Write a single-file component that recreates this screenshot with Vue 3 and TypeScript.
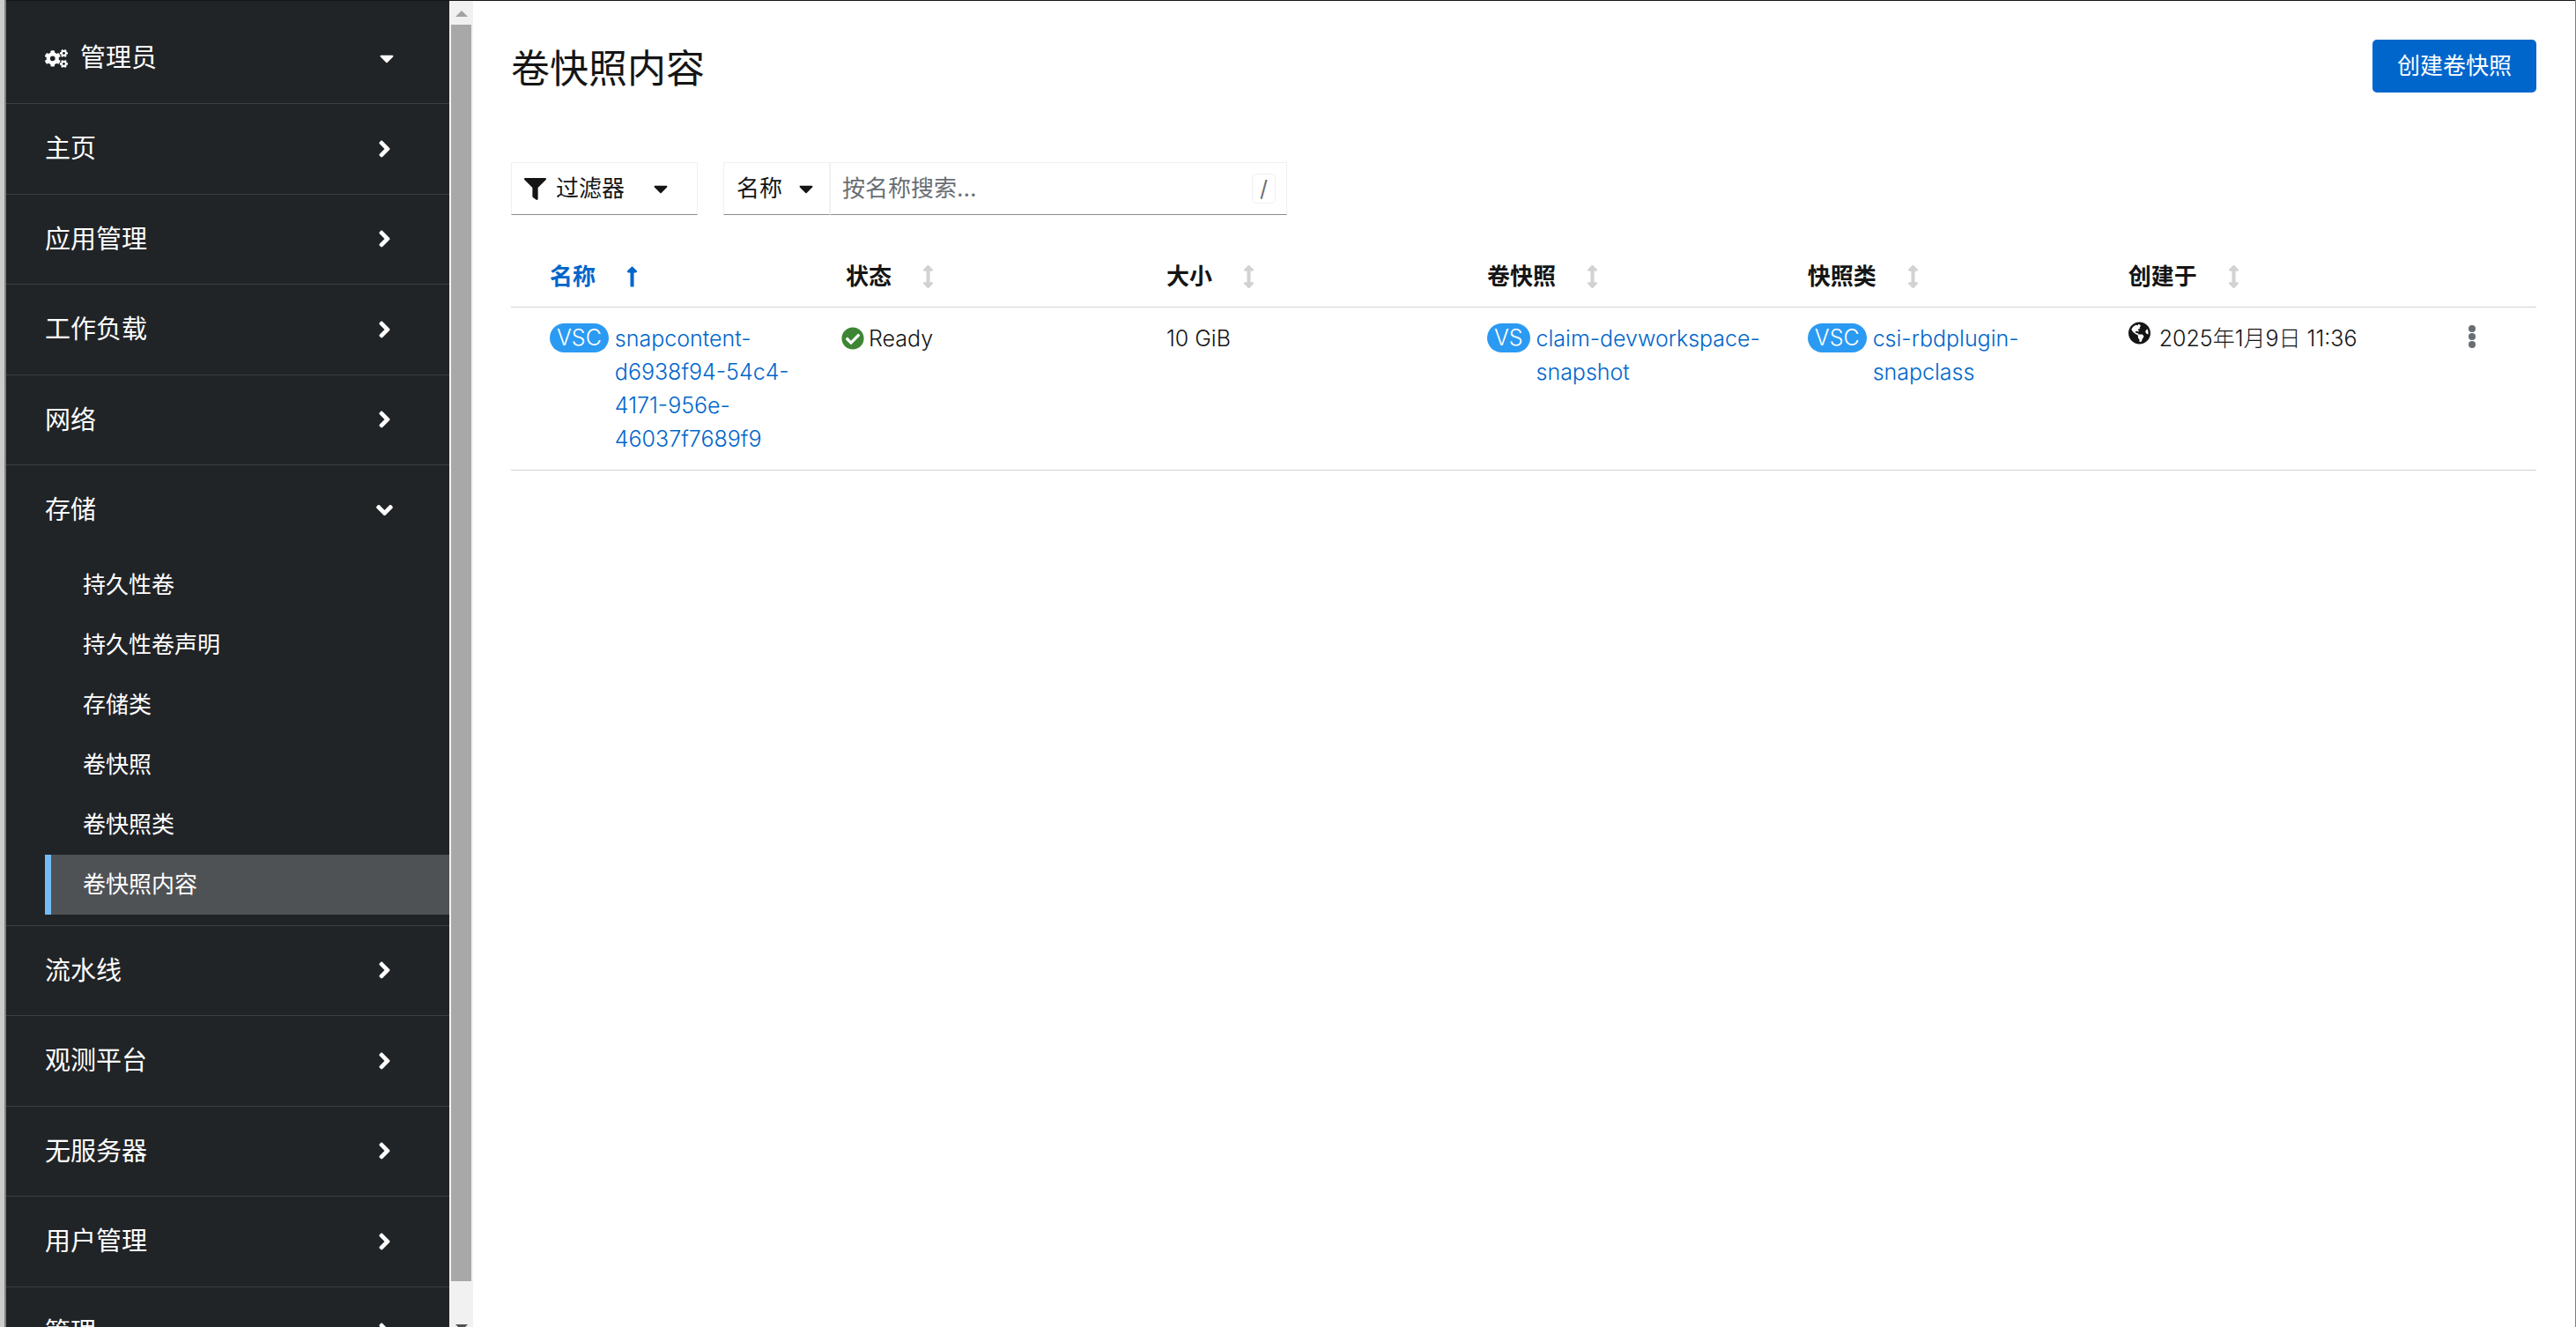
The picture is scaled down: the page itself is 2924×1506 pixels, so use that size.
<script setup lang="ts">
import { ref } from 'vue'

interface NavSection {
  label: string
  children?: string[]
}

interface Column {
  key: string
  label: string
}

const sections: NavSection[] = [
  { label: '主页' },
  { label: '应用管理' },
  { label: '工作负载' },
  { label: '网络' },
  { label: '存储', children: ['持久性卷', '持久性卷声明', '存储类', '卷快照', '卷快照类', '卷快照内容'] },
  { label: '流水线' },
  { label: '观测平台' },
  { label: '无服务器' },
  { label: '用户管理' },
  { label: '管理' },
]

const columns: Column[] = [
  { key: 'name', label: '名称' },
  { key: 'status', label: '状态' },
  { key: 'size', label: '大小' },
  { key: 'snapshot', label: '卷快照' },
  { key: 'class', label: '快照类' },
  { key: 'created', label: '创建于' },
]

const rows = [
  {
    name: 'snapcontent-d6938f94-54c4-4171-956e-46037f7689f9',
    status: 'Ready',
    size: '10 GiB',
    snapshot: 'claim-devworkspace-snapshot',
    snapshotClass: 'csi-rbdplugin-snapclass',
    created: '2025年1月9日 11:36',
  },
]

const openSection = ref('存储')
const activeItem = ref('卷快照内容')
const sortKey = ref('name')
const search = ref('')

function toggle(section: NavSection) {
  openSection.value = openSection.value === section.label ? '' : section.label
}

const caretPath =
  'M31.3 192h257.3c17.8 0 26.7 21.5 14.1 34.1L174.1 354.8c-7.8 7.8-20.5 7.8-28.3 0L17.2 226.1C4.6 213.5 13.5 192 31.3 192z'
const sortUpPath =
  'M88 166.059V468c0 6.627 5.373 12 12 12h56c6.627 0 12-5.373 12-12V166.059h46.059c21.382 0 32.09-25.851 16.971-40.971l-86.059-86.059c-9.373-9.373-24.569-9.373-33.941 0l-86.059 86.059c-15.119 15.119-4.411 40.971 16.971 40.971H88z'
const sortNonePath =
  'M214.059 377.941H168V134.059h46.059c21.382 0 32.09-25.851 16.971-40.971L144.971 7.029c-9.373-9.373-24.568-9.373-33.941 0L24.971 93.088c-15.119 15.119-4.411 40.971 16.971 40.971H88v243.882H41.941c-21.382 0-32.09 25.851-16.971 40.971l86.059 86.059c9.373 9.373 24.568 9.373 33.941 0l86.059-86.059c15.12-15.119 4.412-40.971-16.97-40.971z'
</script>

<template>
  <div class="app">
    <div class="window-edge"></div>
    <div class="shell">
      <nav class="sidebar" aria-label="主导航">
        <button class="perspective" type="button">
          <svg class="cogs" viewBox="0 0 640 512" aria-hidden="true">
            <path
              d="M512.1 191l-8.2 14.3c-3 5.3-9.4 7.5-15.1 5.4-11.8-4.4-22.6-10.7-32.1-18.6-4.6-3.8-5.8-10.5-2.8-15.7l8.2-14.3c-6.9-8-12.3-17.3-15.9-27.4h-16.5c-6 0-11.2-4.3-12.2-10.3-2-12-2.1-24.6 0-37.1 1-6 6.2-10.4 12.2-10.4h16.5c3.6-10.1 9-19.4 15.9-27.4l-8.2-14.3c-3-5.2-1.9-11.9 2.8-15.7 9.5-7.9 20.4-14.2 32.1-18.6 5.7-2.1 12.1.1 15.1 5.4l8.2 14.3c10.5-1.9 21.2-1.9 31.7 0L552 6.3c3-5.3 9.4-7.5 15.1-5.4 11.8 4.4 22.6 10.7 32.1 18.6 4.6 3.8 5.8 10.5 2.8 15.7l-8.2 14.3c6.9 8 12.3 17.3 15.9 27.4h16.5c6 0 11.2 4.3 12.2 10.3 2 12 2.1 24.6 0 37.1-1 6-6.2 10.4-12.2 10.4h-16.5c-3.6 10.1-9 19.4-15.9 27.4l8.2 14.3c3 5.2 1.9 11.9-2.8 15.7-9.5 7.9-20.4 14.2-32.1 18.6-5.7 2.1-12.1-.1-15.1-5.4l-8.2-14.3c-10.4 1.9-21.2 1.9-31.7 0zm-10.5-58.8c38.5 29.6 82.4-14.3 52.8-52.8-38.5-29.7-82.4 14.3-52.8 52.8zM386.3 286.1l33.7 16.8c10.1 5.8 14.5 18.1 10.5 29.1-8.9 24.2-26.4 46.4-42.6 65.8-7.4 8.9-20.2 11.1-30.3 5.3l-29.1-16.8c-16 13.7-34.6 24.6-54.9 31.7v33.6c0 11.6-8.3 21.6-19.7 23.6-24.6 4.2-50.4 4.4-75.9 0-11.5-2-20-11.9-20-23.6V418c-20.3-7.2-38.9-18-54.9-31.7L74 403c-10 5.8-22.9 3.6-30.3-5.3-16.2-19.4-33.3-41.6-42.2-65.7-4-10.9.4-23.2 10.5-29.1l33.3-16.8c-3.9-20.9-3.9-42.4 0-63.4L12 205.8c-10.1-5.8-14.6-18.1-10.5-29 8.9-24.2 26-46.4 42.2-65.8 7.4-8.9 20.2-11.1 30.3-5.3l29.1 16.8c16-13.7 34.6-24.6 54.9-31.7V57.1c0-11.5 8.2-21.5 19.6-23.5 24.6-4.2 50.5-4.4 76-.1 11.5 2 20 11.9 20 23.6v33.6c20.3 7.2 38.9 18 54.9 31.7l29.1-16.8c10-5.8 22.9-3.6 30.3 5.3 16.2 19.4 33.2 41.6 42.1 65.8 4 10.9.1 23.2-10 29.1l-33.7 16.8c3.9 21 3.9 42.5 0 63.5zm-117.6 21.1c59.2-77-28.7-164.9-105.7-105.7-59.2 77 28.7 164.9 105.7 105.7zm243.4 182.7l-8.2 14.3c-3 5.3-9.4 7.5-15.1 5.4-11.8-4.4-22.6-10.7-32.1-18.6-4.6-3.8-5.8-10.5-2.8-15.7l8.2-14.3c-6.9-8-12.3-17.3-15.9-27.4h-16.5c-6 0-11.2-4.3-12.2-10.3-2-12-2.1-24.6 0-37.1 1-6 6.2-10.4 12.2-10.4h16.5c3.6-10.1 9-19.4 15.9-27.4l-8.2-14.3c-3-5.2-1.9-11.9 2.8-15.7 9.5-7.9 20.4-14.2 32.1-18.6 5.7-2.1 12.1.1 15.1 5.4l8.2 14.3c10.5-1.9 21.2-1.9 31.7 0l8.2-14.3c3-5.3 9.4-7.5 15.1-5.4 11.8 4.4 22.6 10.7 32.1 18.6 4.6 3.8 5.8 10.5 2.8 15.7l-8.2 14.3c6.9 8 12.3 17.3 15.9 27.4h16.5c6 0 11.2 4.3 12.2 10.3 2 12 2.1 24.6 0 37.1-1 6-6.2 10.4-12.2 10.4h-16.5c-3.6 10.1-9 19.4-15.9 27.4l8.2 14.3c3 5.2 1.9 11.9-2.8 15.7-9.5 7.9-20.4 14.2-32.1 18.6-5.7 2.1-12.1-.1-15.1-5.4l-8.2-14.3c-10.4 1.9-21.2 1.9-31.7 0zM501.6 431c38.5 29.6 82.4-14.3 52.8-52.8-38.5-29.6-82.4 14.3-52.8 52.8z"
            />
          </svg>
          <span class="perspective-label">管理员</span>
          <svg class="caret" viewBox="0 0 320 512" aria-hidden="true"><path :d="caretPath" /></svg>
        </button>

        <ul class="nav-list">
          <li v-for="section in sections" :key="section.label" class="nav-section">
            <button
              class="nav-toggle"
              type="button"
              :aria-expanded="openSection === section.label"
              @click="toggle(section)"
            >
              <span>{{ section.label }}</span>
              <svg
                class="angle"
                :class="{ open: openSection === section.label }"
                viewBox="0 0 256 512"
                aria-hidden="true"
              >
                <path
                  d="M224.3 273l-136 136c-9.4 9.4-24.6 9.4-33.9 0l-22.6-22.6c-9.4-9.4-9.4-24.6 0-33.9l96.4-96.4-96.4-96.4c-9.4-9.4-9.4-24.6 0-33.9L54.3 103c9.4-9.4 24.6-9.4 33.9 0l136 136c9.5 9.4 9.5 24.6.1 34z"
                />
              </svg>
            </button>
            <ul v-if="section.children && openSection === section.label" class="subnav">
              <li v-for="item in section.children" :key="item">
                <a
                  href="#"
                  class="subnav-link"
                  :class="{ active: item === activeItem }"
                  @click.prevent="activeItem = item"
                  >{{ item }}</a
                >
              </li>
            </ul>
          </li>
        </ul>
      </nav>

      <div class="scrollbar" aria-hidden="true">
        <div class="scroll-up"></div>
        <div class="scroll-thumb"></div>
        <div class="scroll-down"></div>
      </div>

      <main class="content">
        <header class="page-header">
          <h1>卷快照内容</h1>
          <button class="primary" type="button">创建卷快照</button>
        </header>

        <div class="toolbar">
          <button class="field filter" type="button">
            <svg class="funnel" viewBox="0 0 512 512" aria-hidden="true">
              <path
                d="M487.976 0H24.028C2.71 0-8.047 25.866 7.058 40.971L192 225.941V432c0 7.831 3.821 15.17 10.237 19.662l80 55.98C298.02 518.69 320 507.493 320 487.98V225.941l184.947-184.97C520.021 25.896 509.338 0 487.976 0z"
              />
            </svg>
            <span class="filter-label">过滤器</span>
            <svg class="caret" viewBox="0 0 320 512" aria-hidden="true"><path :d="caretPath" /></svg>
          </button>

          <div class="search-group">
            <div class="select-wrap">
              <select class="field" aria-label="搜索字段">
                <option>名称</option>
              </select>
              <svg class="caret select-caret" viewBox="0 0 320 512" aria-hidden="true">
                <path :d="caretPath" />
              </svg>
            </div>
            <div class="field search">
              <input v-model="search" type="text" aria-label="按名称搜索" placeholder="按名称搜索..." />
              <kbd>/</kbd>
            </div>
          </div>
        </div>

        <table>
          <colgroup>
            <col class="col-name" />
            <col v-for="n in 5" :key="n" class="col-data" />
            <col class="col-actions" />
          </colgroup>
          <thead>
            <tr>
              <th v-for="column in columns" :key="column.key" scope="col">
                <button
                  class="sort"
                  :class="{ sorted: sortKey === column.key }"
                  type="button"
                  @click="sortKey = column.key"
                >
                  <span>{{ column.label }}</span>
                  <svg viewBox="0 0 256 512" aria-hidden="true">
                    <path :d="sortKey === column.key ? sortUpPath : sortNonePath" />
                  </svg>
                </button>
              </th>
              <td></td>
            </tr>
          </thead>
          <tbody>
            <tr v-for="row in rows" :key="row.name">
              <td>
                <div class="resource">
                  <span class="badge">VSC</span><a href="#">{{ row.name }}</a>
                </div>
              </td>
              <td>
                <div class="status">
                  <svg viewBox="0 0 512 512" aria-hidden="true">
                    <path
                      d="M504 256c0 136.967-111.033 248-248 248S8 392.967 8 256 119.033 8 256 8s248 111.033 248 248zM227.314 387.314l184-184c6.248-6.248 6.248-16.379 0-22.627l-22.627-22.627c-6.248-6.249-16.379-6.249-22.628 0L216 308.118l-70.059-70.059c-6.248-6.248-16.379-6.248-22.628 0l-22.627 22.627c-6.248 6.248-6.248 16.379 0 22.627l104 104c6.249 6.249 16.379 6.249 22.628.001z"
                    />
                  </svg>
                  <span>{{ row.status }}</span>
                </div>
              </td>
              <td>{{ row.size }}</td>
              <td>
                <div class="resource">
                  <span class="badge">VS</span><a href="#">{{ row.snapshot }}</a>
                </div>
              </td>
              <td>
                <div class="resource">
                  <span class="badge">VSC</span><a href="#">{{ row.snapshotClass }}</a>
                </div>
              </td>
              <td>
                <div class="created">
                  <svg viewBox="0 0 496 512" aria-hidden="true">
                    <path
                      d="M248 8C111.03 8 0 119.03 0 256s111.03 248 248 248 248-111.03 248-248S384.97 8 248 8zm82.29 357.6c-3.9 3.88-7.99 7.95-11.31 11.28-2.99 3-5.1 6.7-6.17 10.71-1.51 5.66-2.73 11.38-4.77 16.87l-17.39 46.85c-13.76 3-28 4.69-42.65 4.69v-27.38c1.69-12.62-7.64-36.26-22.63-51.25-6-6-9.37-14.14-9.37-22.63v-32.01c0-11.64-6.27-22.34-16.46-27.97-14.37-7.95-34.81-19.06-48.81-26.11-11.48-5.78-22.1-13.14-31.65-21.75l-.8-.72a114.792 114.792 0 0 1-18.06-20.74c-9.38-13.77-24.66-36.42-34.59-51.14 20.47-45.5 57.36-82.04 103.2-101.89l24.01 12.01C203.48 89.74 216 82.01 216 70.11v-11.3c7.99-1.29 16.12-2.11 24.39-2.42l28.3 28.3c6.25 6.25 6.25 16.38 0 22.63L264 112l-10.34 10.34c-3.12 3.12-3.12 8.19 0 11.31l4.69 4.69c3.12 3.12 3.12 8.19 0 11.31l-8 8a8.008 8.008 0 0 1-5.66 2.34h-8.99c-2.08 0-4.08.81-5.58 2.27l-9.92 9.65a8.008 8.008 0 0 0-1.58 9.31l15.59 31.19c2.66 5.32-1.21 11.58-7.15 11.58h-5.64c-1.93 0-3.79-.7-5.24-1.96l-9.28-8.06a16.017 16.017 0 0 0-15.55-3.1l-31.17 10.39a11.95 11.95 0 0 0-8.17 11.34c0 4.53 2.56 8.66 6.61 10.69l11.08 5.54c9.41 4.71 19.79 7.16 30.31 7.16s22.59 27.29 32 32h66.75c8.49 0 16.62 3.37 22.63 9.37l13.69 13.69a30.503 30.503 0 0 1 8.93 21.57 46.536 46.536 0 0 1-13.72 32.98zM417 274.25c-5.79-1.45-10.84-5-14.15-9.97l-17.98-26.97a23.97 23.97 0 0 1 0-26.62l19.59-29.38c2.32-3.47 5.5-6.29 9.24-8.15l12.98-6.49C440.2 193.59 448 223.87 448 256c0 8.67-.74 17.16-1.82 25.54L417 274.25z"
                    />
                  </svg>
                  <span>{{ row.created }}</span>
                </div>
              </td>
              <td class="actions">
                <button class="kebab" type="button" aria-label="操作">
                  <svg viewBox="0 0 8 26" aria-hidden="true">
                    <circle cx="4" cy="4" r="4" />
                    <circle cx="4" cy="13" r="4" />
                    <circle cx="4" cy="22" r="4" />
                  </svg>
                </button>
              </td>
            </tr>
          </tbody>
        </table>
      </main>
    </div>
  </div>
</template>

<style>
body {
  overflow: hidden;
}
</style>

<style scoped>
.app {
  display: flex;
  height: 100vh;
  box-sizing: border-box;
  border-right: 1px solid #808080;
  background: #fff;
  color: #151515;
  font-family: Inter, 'Noto Sans CJK SC', sans-serif;
  font-size: 25px;
  line-height: 38px;
}

.app *,
.app *::before {
  box-sizing: border-box;
}

svg {
  display: block;
  flex: none;
  fill: currentColor;
}

button,
select,
input {
  margin: 0;
  padding: 0;
  border: 0;
  border-radius: 0;
  background: none;
  color: inherit;
  font: inherit;
  text-align: left;
  outline: none;
}

ul {
  margin: 0;
  padding: 0;
  list-style: none;
}

a {
  color: #06c;
  text-decoration: none;
}

.window-edge {
  flex: none;
  width: 7px;
  border-right: 2px solid #808080;
  background: #ccc;
}

.shell {
  display: flex;
  flex: 1;
  min-width: 0;
  border-top: 1px solid #151515;
}

/* Sidebar */
.sidebar {
  flex: none;
  width: 503px;
  overflow: hidden;
  background: #212427;
  color: #fff;
  font-size: 29px;
  line-height: 1.5;
}

.perspective {
  display: flex;
  align-items: center;
  width: 100%;
  height: 116px;
  padding: 14px 63px 0 44px;
}

.perspective,
.nav-toggle {
  cursor: pointer;
}

.cogs {
  width: 26px;
  height: 21px;
}

.perspective-label {
  flex: 1;
  margin-left: 14px;
}

.caret {
  width: 16px;
  height: 26px;
}

.nav-section {
  border-top: 1px solid #3c3f42;
}

.nav-toggle {
  display: flex;
  align-items: center;
  justify-content: space-between;
  width: 100%;
  padding: 29px 66px 29px 44px;
}

.angle {
  width: 15px;
  height: 30px;
}

.angle.open {
  transform: rotate(90deg);
}

.subnav {
  padding-bottom: 12px;
  padding-left: 44px;
  font-size: 26px;
}

.subnav-link {
  display: block;
  padding: 14px 0 15px 36px;
  border-left: 7px solid transparent;
  color: #fff;
}

.subnav-link.active {
  border-left-color: #73bcf7;
  background: #4f5255;
}

/* Scroll bar beside the navigation */
.scrollbar {
  display: flex;
  flex: none;
  flex-direction: column;
  align-items: center;
  width: 27px;
  overflow: hidden;
  background: #f1f1f1;
}

.scroll-up,
.scroll-down {
  display: flex;
  flex: none;
  justify-content: center;
}

.scroll-up {
  height: 27px;
  padding-top: 11px;
}

.scroll-up::before {
  width: 0;
  height: 0;
  border: 7px solid transparent;
  border-top: 0;
  border-bottom-color: #a3a3a3;
  content: '';
}

.scroll-thumb {
  flex: 1;
  width: 23px;
  background: #a8a8a8;
}

.scroll-down {
  height: 52px;
  padding-top: 49px;
  overflow: hidden;
}

.scroll-down::before {
  width: 0;
  height: 0;
  border: 7px solid transparent;
  border-top-color: #505050;
  border-bottom: 0;
  content: '';
}

/* Page */
.content {
  flex: 1;
  min-width: 0;
  padding: 44px 44px 0 43px;
}

.page-header {
  display: flex;
  align-items: flex-start;
  justify-content: space-between;
}

h1 {
  margin: 0;
  font-size: 44px;
  font-weight: 400;
  line-height: 66px;
}

.primary {
  height: 60px;
  padding: 0 28px;
  border-radius: 5px;
  background: #06c;
  color: #fff;
  font-size: 26px;
}

.toolbar {
  display: flex;
  gap: 29px;
  margin-top: 73px;
  font-size: 26px;
}

.field {
  height: 60px;
  border: 1px solid #f0f0f0;
  border-bottom-color: #8a8d90;
}

.filter {
  display: flex;
  align-items: center;
  width: 212px;
  padding: 0 14px;
}

.funnel {
  width: 25px;
  height: 25px;
}

.filter-label {
  margin: 0 33px 0 11px;
}

.search-group {
  display: flex;
  width: 640px;
}

.select-wrap {
  position: relative;
  flex: none;
  width: 121px;
}

.select-wrap select {
  width: 100%;
  padding-left: 14px;
  appearance: none;
}

.select-caret {
  position: absolute;
  top: 17px;
  right: 19px;
  pointer-events: none;
}

.search {
  display: flex;
  flex: 1;
  align-items: center;
  min-width: 0;
  padding: 0 12px 0 13px;
}

.search input {
  flex: 1;
  min-width: 0;
}

.search input::placeholder {
  color: #6a6e73;
  opacity: 1;
}

kbd {
  width: 27px;
  height: 34px;
  border: 1px solid #f0f0f0;
  border-radius: 5px;
  color: #6a6e73;
  font-family: inherit;
  font-size: 25px;
  line-height: 32px;
  text-align: center;
}

/* Table */
table {
  width: 100%;
  margin-top: 37px;
  border-collapse: collapse;
  table-layout: fixed;
}

.col-name {
  width: 15.4%;
}

.col-data {
  width: 15.83%;
}

th,
td {
  padding: 16px 12px 16px 26px;
  border-bottom: 1px solid #d2d2d2;
  text-align: left;
  vertical-align: top;
}

tbody td {
  font-weight: 300;
}

th {
  padding-top: 14px;
  padding-bottom: 15px;
  font-weight: 700;
}

th:first-child,
td:first-child {
  padding-left: 44px;
}

thead td {
  padding: 0;
}

.sort {
  display: flex;
  align-items: center;
  gap: 35px;
  font-size: 26px;
  cursor: pointer;
}

.sort svg {
  width: 13px;
  height: 26px;
  color: #d2d2d2;
}

.sort.sorted,
.sort.sorted svg {
  color: #06c;
}

.resource {
  display: flex;
  align-items: flex-start;
  gap: 7px;
}

.badge {
  flex: none;
  margin-top: 2px;
  padding: 0 8px;
  border-radius: 17px;
  background: #2b9af3;
  color: #fff;
  line-height: 33px;
}

.status {
  display: flex;
  align-items: center;
  gap: 5px;
  margin-left: -5px;
}

.status svg {
  width: 26px;
  height: 26px;
  color: #3e8635;
}

.created {
  display: flex;
  gap: 10px;
  white-space: nowrap;
}

.created svg {
  width: 25px;
  height: 26px;
}

td.actions {
  padding: 16px 0;
}

.kebab {
  display: flex;
  align-items: center;
  height: 34px;
  margin-left: auto;
  padding: 0 69px 0 0;
  color: #6a6e73;
}

.kebab svg {
  width: 8px;
  height: 26px;
}
</style>
